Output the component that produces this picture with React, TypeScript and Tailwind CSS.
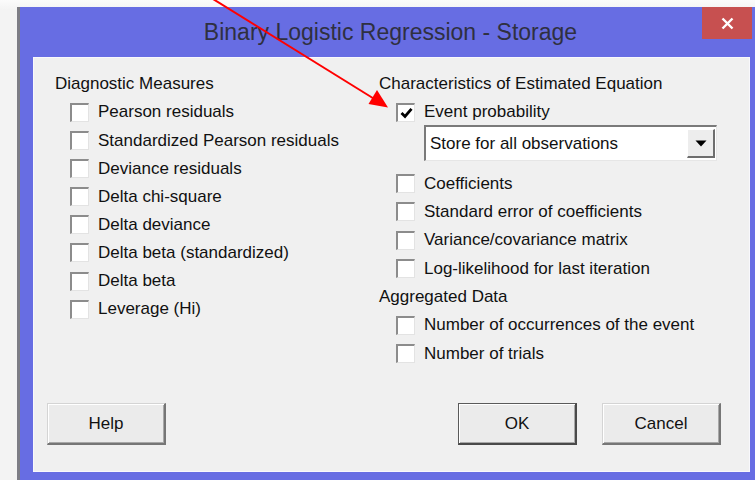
import React from "react";

function Box({ checked }: { checked?: boolean }) {
  return (
    <span className="w-[19px] h-[19px] shrink-0 bg-white border-t-2 border-l-2 border-t-[#8c8c8c] border-l-[#8c8c8c] border-b border-r border-b-[#e3e3e3] border-r-[#e3e3e3] flex items-center justify-center">
      {checked && (
        <svg width="13" height="12" viewBox="0 0 13 12">
          <path d="M1.5 6 L5 9.5 L11.5 1.8" fill="none" stroke="#000" strokeWidth="2.8" />
        </svg>
      )}
    </span>
  );
}

function Row({ label, checked, indent, h }: { label: string; checked?: boolean; indent: string; h?: string }) {
  return (
    <div className={`flex items-center ${h ?? "h-[28.15px]"} gap-[9px] ${indent}`}>
      <Box checked={checked} />
      <span className="whitespace-nowrap">{label}</span>
    </div>
  );
}

function Btn({ label, def }: { label: string; def?: boolean }) {
  return (
    <div
      className={`w-[119px] h-[42px] flex items-center justify-center bg-[#ebebeb] border-t border-l border-b-2 border-r-2 ${
        def
          ? "border-t-[#5a5a5a] border-l-[#5a5a5a] border-b-[#4a4a4a] border-r-[#4a4a4a]"
          : "border-t-[#d4d4d4] border-l-[#d4d4d4] border-b-[#767676] border-r-[#767676]"
      } shadow-[inset_1px_1px_0_#ffffff,inset_-1px_-1px_0_#a8a8a8]`}
    >
      {label}
    </div>
  );
}

export default function App() {
  const left = [
    "Pearson residuals",
    "Standardized Pearson residuals",
    "Deviance residuals",
    "Delta chi-square",
    "Delta deviance",
    "Delta beta (standardized)",
    "Delta beta",
    "Leverage (Hi)",
  ];
  const rh = "h-[28.35px]";
  return (
    <div className="relative w-[755px] h-[480px] overflow-hidden bg-[linear-gradient(180deg,#fbfbfb_0px,#f3f3f3_10px)] font-['Liberation_Sans',Arial,sans-serif] text-[17px] text-[#111]">
      <div className="ml-[17px] mt-[7px] w-[738px] h-[473px] bg-[#676de3] border-l-[3px] border-l-[#7d7d85] flex flex-col">
        <div className="relative h-[50px] flex items-center justify-center text-[23px] text-[#2f3040]">
          <span className="pl-[6px]">Binary Logistic Regression - Storage</span>
          <div className="absolute right-[3px] top-0 w-[50px] h-[32px] bg-[#c75050] flex items-center justify-center">
            <svg width="13" height="13" viewBox="0 0 13 13">
              <path d="M1.5 1.5 L11.5 11.5 M11.5 1.5 L1.5 11.5" stroke="#fff" strokeWidth="2.4" />
            </svg>
          </div>
        </div>
        <div className="ml-[13px] w-[717px] h-[415px] bg-[#f0f0f0] border border-[#f8f8fc] flex flex-col justify-between pb-[26px]">
          <div className="flex pt-[12px] pl-[21px]">
            <div className="w-[324px] flex flex-col">
              <div className="h-[28.15px] flex items-center">Diagnostic Measures</div>
              {left.map((l) => (
                <Row key={l} label={l} indent="pl-[15px]" />
              ))}
            </div>
            <div className="flex flex-col">
              <div className="h-[28.15px] flex items-center whitespace-nowrap">Characteristics of Estimated Equation</div>
              <Row label="Event probability" checked indent="pl-[17px]" />
              <div className="h-[43px] pl-[45px]">
                <div className="-mt-[1px] w-[293px] h-[36px] bg-white border-t-2 border-l-2 border-t-[#7a7a7a] border-l-[#7a7a7a] border-b border-r border-b-[#e6e6e6] border-r-[#e6e6e6] flex items-center justify-between pl-[4px] pr-[1px]">
                  <span className="whitespace-nowrap">Store for all observations</span>
                  <div className="w-[28px] h-[29px] bg-[#ededed] border-t border-l border-t-[#ffffff] border-l-[#ffffff] border-b-2 border-r-2 border-b-[#6e6e6e] border-r-[#6e6e6e] flex items-center justify-center">
                    <svg width="12" height="7" viewBox="0 0 12 7">
                      <path d="M0.5 0.5 L11.5 0.5 L6 6.5 Z" fill="#000" />
                    </svg>
                  </div>
                </div>
              </div>
              <Row label="Coefficients" indent="pl-[17px]" h={rh} />
              <Row label="Standard error of coefficients" indent="pl-[17px]" h={rh} />
              <Row label="Variance/covariance matrix" indent="pl-[17px]" h={rh} />
              <Row label="Log-likelihood for last iteration" indent="pl-[17px]" h={rh} />
              <div className="h-[28.35px] flex items-center">Aggregated Data</div>
              <Row label="Number of occurrences of the event" indent="pl-[17px]" h={rh} />
              <Row label="Number of trials" indent="pl-[17px]" h={rh} />
            </div>
          </div>
          <div className="flex items-center pl-[13px] pr-[28px]">
            <Btn label="Help" />
            <div className="flex-1" />
            <Btn label="OK" def />
            <div className="w-[25px]" />
            <Btn label="Cancel" />
          </div>
        </div>
      </div>
      <svg className="absolute inset-0 pointer-events-none" width="755" height="480" viewBox="0 0 755 480">
        <line x1="213" y1="-1" x2="376" y2="100" stroke="#ff0000" strokeWidth="2" />
        <polygon points="388,107.5 368.5,104 377,90" fill="#ff0000" />
      </svg>
    </div>
  );
}
